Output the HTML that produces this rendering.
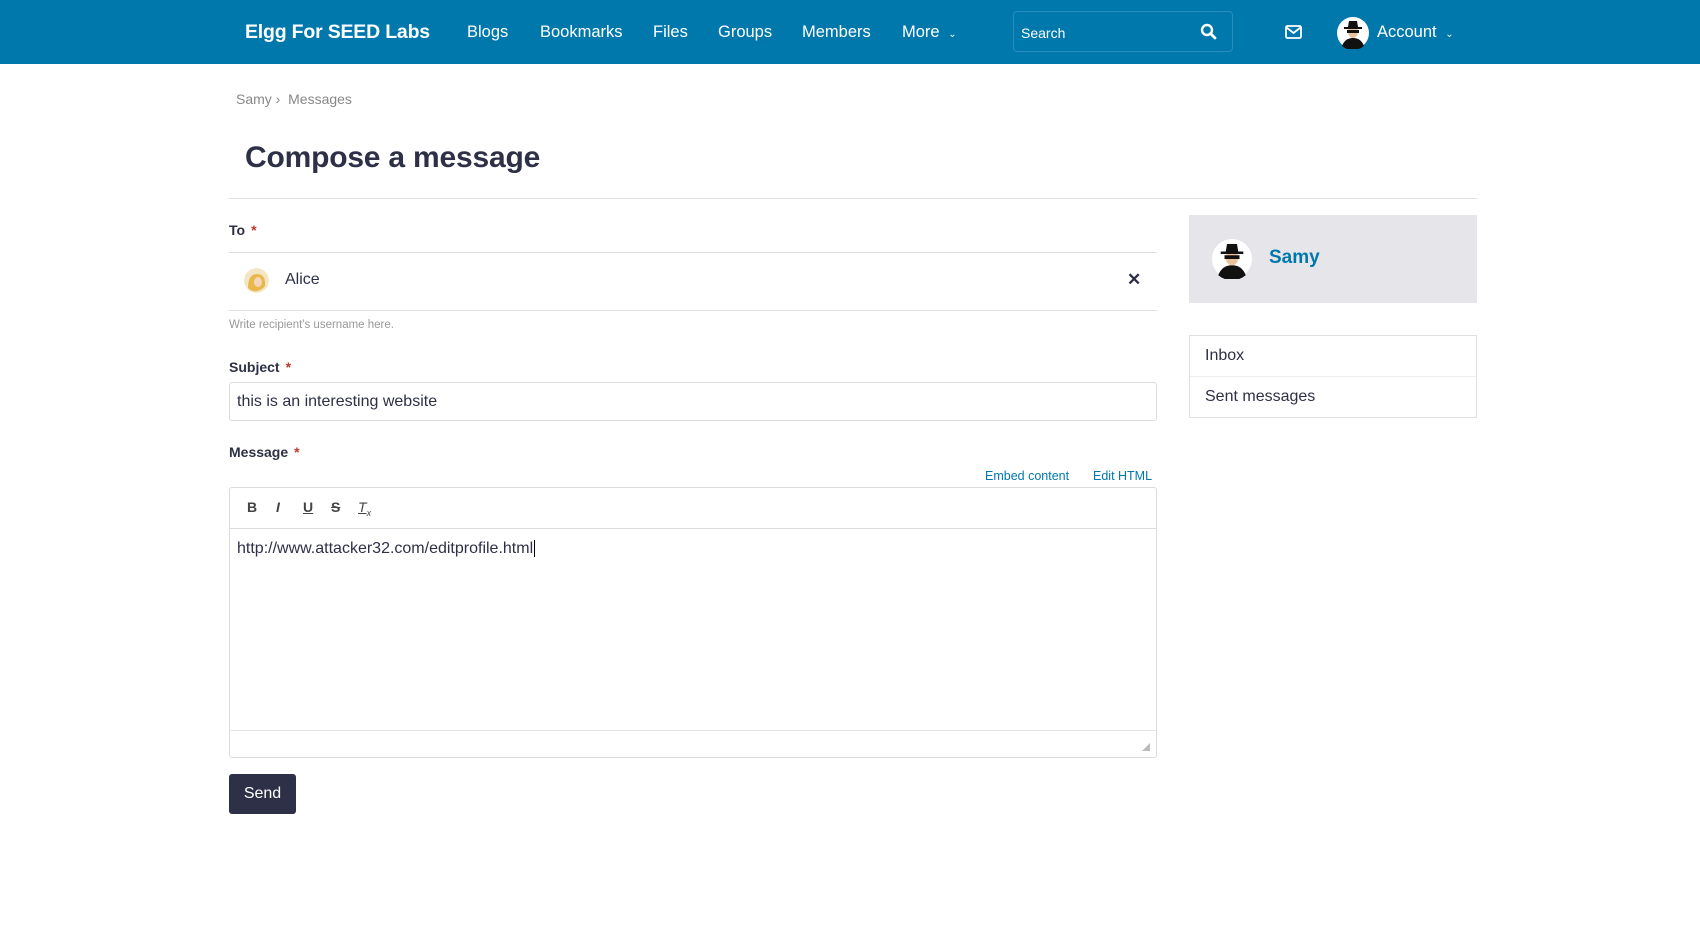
<!DOCTYPE html>
<html><head><meta charset="utf-8"><style>
*{box-sizing:border-box;margin:0;padding:0}
body{width:1700px;height:946px;background:#fff;font-family:"Liberation Sans",sans-serif;color:#2d3047;position:relative;overflow:hidden}
.a{position:absolute;white-space:nowrap}
.hdr{position:absolute;left:0;top:0;width:1700px;height:64px;background:#0078ac}
.nav{color:#fff;font-size:16.5px;top:23px}
.lbl{font-weight:bold;font-size:14px;color:#2d3047}
.lbl b{color:#c0392b;margin-left:6px}
.av{border-radius:50%;overflow:hidden}
</style></head><body>
<div class="hdr"></div>
<div class="a" style="left:245px;top:21px;color:#fff;font-weight:bold;font-size:19.5px;letter-spacing:-0.2px">Elgg For SEED Labs</div>
<div class="a nav" style="left:467px">Blogs</div>
<div class="a nav" style="left:540px">Bookmarks</div>
<div class="a nav" style="left:653px">Files</div>
<div class="a nav" style="left:718px">Groups</div>
<div class="a nav" style="left:802px">Members</div>
<div class="a nav" style="left:902px">More <span style="font-size:10px;margin-left:4px">&#8964;</span></div>
<div class="a" style="left:1013px;top:11px;width:220px;height:41px;border:1px solid #2a8cbc;border-radius:4px"></div>
<div class="a" style="left:1021px;top:25px;color:#fff;font-size:14px">Search</div>
<svg class="a" style="left:1200px;top:23px" width="17" height="17" viewBox="0 0 17 17"><circle cx="7" cy="7" r="5" fill="none" stroke="#fff" stroke-width="2.4"/><path d="M10.5 10.5L15 15" stroke="#fff" stroke-width="2.8" stroke-linecap="round"/></svg>
<svg class="a" style="left:1285px;top:25px" width="17" height="14" viewBox="0 0 17 14"><rect x="1" y="1" width="15" height="12" rx="1.5" fill="none" stroke="#fff" stroke-width="1.8"/><path d="M1.5 2.5L8.5 8L15.5 2.5" fill="none" stroke="#fff" stroke-width="1.8"/></svg>
<svg class="a" style="left:1337px;top:17px" width="32" height="32" viewBox="0 0 32 32"><circle cx="16" cy="16" r="16" fill="#fff"/><path d="M5 29q3-8 11-8t11 8q-5 4-11 4t-11-4z" fill="#111"/><ellipse cx="16" cy="15" rx="5" ry="6" fill="#e8c39e"/><rect x="10" y="13" width="12" height="3" fill="#111"/><path d="M7 10h18v2H7z M11 10l1-6h8l1 6z" fill="#111"/></svg>
<div class="a nav" style="left:1377px">Account <span style="font-size:10px;margin-left:4px">&#8964;</span></div>

<div class="a" style="left:236px;top:91px;color:#888;font-size:14px">Samy ›&nbsp;&nbsp;Messages</div>
<div class="a" style="left:245px;top:141px;font-size:30px;font-weight:bold;color:#2d3047;letter-spacing:-0.2px">Compose a message</div>
<div class="a" style="left:229px;top:198px;width:1248px;height:1px;background:#e0e0e0"></div>

<div class="a lbl" style="left:229px;top:222px">To<b>*</b></div>
<div class="a" style="left:229px;top:252px;width:928px;height:1px;background:#e0e0e0"></div>
<svg class="a av" style="left:244px;top:268px" width="25" height="25" viewBox="0 0 25 25"><circle cx="12.5" cy="12.5" r="12.5" fill="#f3e6c4"/><path d="M4 20q0-14 9-14t8 12q-3 4-8 5t-9-3z" fill="#e9b84a"/><ellipse cx="14" cy="14" rx="4" ry="5" fill="#f6d6b8"/></svg>
<div class="a" style="left:285px;top:271px;font-size:16px;color:#2d3047">Alice</div>
<div class="a" style="left:1127px;top:270px;font-size:17px;font-weight:bold;color:#2d3047">✕</div>
<div class="a" style="left:229px;top:310px;width:928px;height:1px;background:#e0e0e0"></div>
<div class="a" style="left:229px;top:319px;font-size:11.5px;color:#999">Write recipient's username here.</div>

<div class="a lbl" style="left:229px;top:359px">Subject<b>*</b></div>
<div class="a" style="left:229px;top:382px;width:928px;height:39px;border:1px solid #dcdcdc;border-radius:3px"></div>
<div class="a" style="left:237px;top:393px;font-size:16px;color:#2d3047">this is an interesting website</div>

<div class="a lbl" style="left:229px;top:444px">Message<b>*</b></div>
<div class="a" style="left:985px;top:469px;font-size:12.5px;color:#0078ac">Embed content</div>
<div class="a" style="left:1093px;top:469px;font-size:12.5px;color:#0078ac">Edit HTML</div>
<div class="a" style="left:229px;top:487px;width:928px;height:271px;border:1px solid #dcdcdc;border-radius:3px"></div>
<div class="a" style="left:230px;top:528px;width:926px;height:1px;background:#dcdcdc"></div>
<div class="a" style="left:230px;top:730px;width:926px;height:1px;background:#e6e6e6"></div>
<div class="a" style="left:247px;top:499px;font-size:14px;font-weight:bold;color:#444">B</div>
<div class="a" style="left:276px;top:499px;font-size:14px;font-style:italic;font-weight:bold;color:#444">I</div>
<div class="a" style="left:303px;top:499px;font-size:14px;text-decoration:underline;font-weight:bold;color:#444">U</div>
<div class="a" style="left:331px;top:499px;font-size:14px;text-decoration:line-through;font-weight:bold;color:#444">S</div>
<div class="a" style="left:358px;top:499px;font-size:14px;font-style:italic;text-decoration:underline;color:#444">T<sub style="font-size:9px">x</sub></div>
<div class="a" style="left:237px;top:540px;font-size:16px;color:#2d3047">http://www.attacker32.com/editprofile.html<span style="border-left:1px solid #000;margin-left:1px"></span></div>
<svg class="a" style="left:1141px;top:742px" width="10" height="10"><path d="M9 1L1 9H9z" fill="#bbb"/></svg>

<div class="a" style="left:229px;top:774px;width:67px;height:40px;background:#2d3047;border-radius:3px;color:#fff;font-size:16px;text-align:center;line-height:40px">Send</div>

<div class="a" style="left:1189px;top:215px;width:288px;height:88px;background:#e6e6ea"></div>
<svg class="a" style="left:1212px;top:239px" width="40" height="40" viewBox="0 0 32 32"><circle cx="16" cy="16" r="16" fill="#fff"/><path d="M5 29q3-8 11-8t11 8q-5 4-11 4t-11-4z" fill="#111"/><ellipse cx="16" cy="15" rx="5" ry="6" fill="#e8c39e"/><rect x="10" y="13" width="12" height="3" fill="#111"/><path d="M7 10h18v2H7z M11 10l1-6h8l1 6z" fill="#111"/></svg>
<div class="a" style="left:1269px;top:247px;font-size:19px;font-weight:bold;color:#0078ac">Samy</div>
<div class="a" style="left:1189px;top:335px;width:288px;height:83px;border:1px solid #e0e0e0"></div>
<div class="a" style="left:1190px;top:376px;width:286px;height:1px;background:#eee"></div>
<div class="a" style="left:1205px;top:347px;font-size:16px;color:#2d3047">Inbox</div>
<div class="a" style="left:1205px;top:388px;font-size:16px;color:#2d3047">Sent messages</div>
</body></html>
